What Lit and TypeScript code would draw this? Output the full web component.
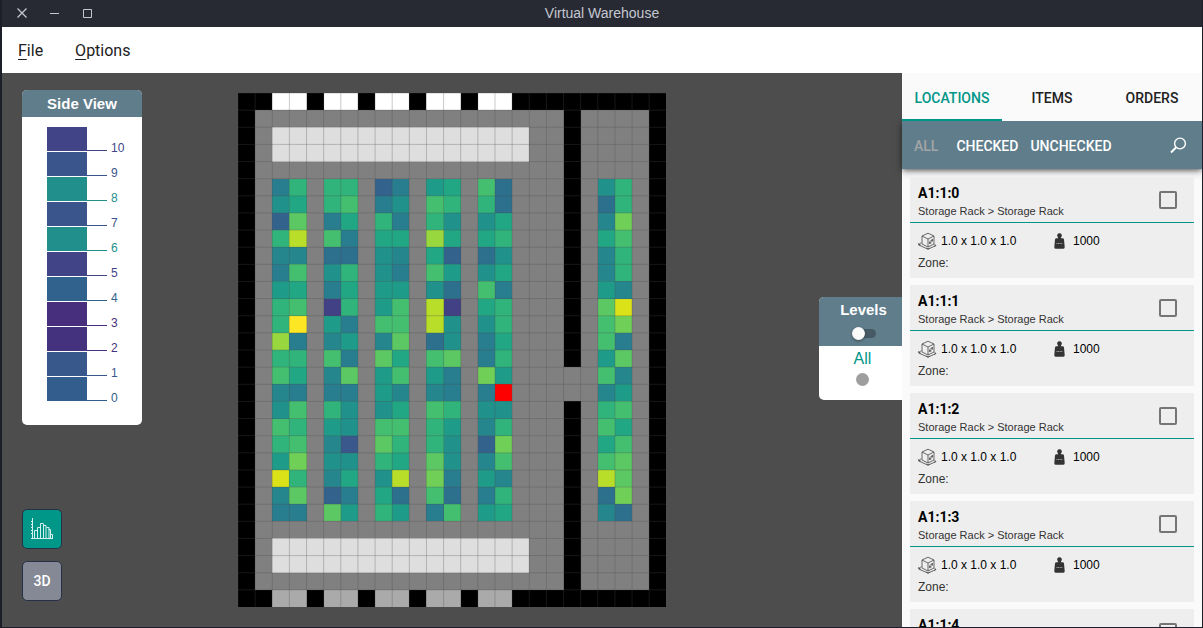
import { LitElement, html, svg, css } from "lit";
import { customElement, state } from "lit/decorators.js";

const SANS = css`"Liberation Sans", Arial, sans-serif`;

// Viridis ramp, sampled from 0.20 (a) to 1.00 (q); R marks the selected cell.
const RAMP: Record<string, string> = {
  a: "#424186", b: "#3a588c", c: "#33638d", d: "#2d708e", e: "#287d8e",
  f: "#25878d", g: "#21918c", h: "#1f9c89", i: "#22a785", j: "#30b47b",
  k: "#44bf70", l: "#5cc863", m: "#6fcf57", n: "#98d83e", o: "#b8de29",
  p: "#dce218", q: "#fde725", R: "#ff0000",
};

const RACK_COLUMNS = [2, 3, 5, 6, 8, 9, 11, 12, 14, 15, 21, 22];
const RACK_ROWS = [
  "ejjjcehikdgj", "gijkegkjjddj", "cleijejggifm", "jokeiiniijik",
  "ffddgficdgfj", "ekgjgekhgifj", "hieihhgdkehf", "jkajhkoaijlp",
  "jqhekkoggjkm", "nefhfldgeike", "jjkeliklejhl", "kiflhkhemhkf",
  "feeehffeeRfh", "gkjggikjggjk", "kjhgkkjhfjki", "jkfbljjgcmik",
  "hmggjilgfkkl", "pjfigomehfol", "flceidkdejdm", "eelhjhekhifd",
];
const COLS = 25;
const ROWS = 30;

const LEVELS = [
  [10, "#414487"], [9, "#39558c"], [8, "#218f8c"], [7, "#39558c"],
  [6, "#218f8c"], [5, "#414487"], [4, "#31628d"], [3, "#472f7d"],
  [2, "#45327e"], [1, "#38588c"], [0, "#335d8d"],
] as const;

@customElement("warehouse-map")
class WarehouseMap extends LitElement {
  static styles = css`
    :host { display: block; height: 100%; min-height: 0; }
    .map { display: block; height: 100%; aspect-ratio: 25 / 30; }
    .line { stroke: #4b4b4b; stroke-opacity: 0.3; stroke-width: 1; vector-effect: non-scaling-stroke; }
  `;

  private rect(x: number, y: number, w: number, h: number, fill: string) {
    return svg`<rect x=${x} y=${y} width=${w} height=${h} fill=${fill}></rect>`;
  }

  render() {
    const docks = [2, 5, 8, 11, 14];
    const cells = RACK_ROWS.flatMap((row, r) =>
      RACK_COLUMNS.map((c, i) => this.rect(c, r + 5, 1, 1, RAMP[row[i]])));
    return html`<svg class="map" viewBox="0 0 25 30" role="img" aria-label="Warehouse floor">
      <g shape-rendering="crispEdges">
        ${this.rect(0, 0, COLS, ROWS, "#000")}
        ${this.rect(1, 1, 18, 28, "#808080")}
        ${this.rect(20, 1, 4, 28, "#808080")}
        ${this.rect(19, 16, 1, 2, "#808080")}
        ${this.rect(2, 2, 15, 2, "#dedede")}
        ${this.rect(2, 26, 15, 2, "#dedede")}
        ${docks.map((x) => this.rect(x, 0, 2, 1, "#fff"))}
        ${docks.map((x) => this.rect(x, 29, 2, 1, "#aaa"))}
        ${cells}
      </g>
      ${Array.from({ length: COLS }, (_, x) => svg`<line class="line" x1=${x} x2=${x} y1="0" y2="30"></line>`)}
      ${Array.from({ length: ROWS }, (_, y) => svg`<line class="line" x1="0" x2="25" y1=${y} y2=${y}></line>`)}
    </svg>`;
  }
}

@customElement("side-view")
class SideView extends LitElement {
  static styles = css`
    :host { display: block; width: 120px; border-radius: 5px; background: #fff; overflow: hidden; font-family: ${SANS}; }
    .title { margin: 0; background: #607d8b; color: #fff; font-size: 15px; line-height: 27px; font-weight: bold; text-align: center; }
    .bars { margin: 0; padding: 10px 0 24px 25px; display: grid; gap: 1px; list-style: none; }
    .level { display: flex; align-items: flex-end; height: 24px; font-size: 12px; line-height: 5px; }
    .bar { width: 40px; height: 24px; background: currentColor; }
    .tick { width: 20px; height: 1px; margin-right: 4px; background: currentColor; }
  `;

  render() {
    return html`<h2 class="title">Side View</h2>
      <ul class="bars">
        ${LEVELS.map(([n, color]) => html`<li class="level" style="color:${color}">
          <span class="bar"></span><span class="tick"></span><span>${n}</span>
        </li>`)}
      </ul>`;
  }
}

@customElement("location-card")
class LocationCard extends LitElement {
  static properties = { name: {} };
  declare name: string;

  static styles = css`
    :host { display: block; flex: none; background: #eee; font-family: ${SANS}; color: #000; }
    .head { display: flex; justify-content: space-between; align-items: center; height: 45px; padding: 0 17px 0 8px; border-bottom: 1px solid #009688; }
    .title { padding-top: 4px; }
    .name { display: block; font-size: 14px; line-height: 18px; font-weight: bold; font-family: Roboto, sans-serif; }
    .path { display: block; font-size: 11px; line-height: 18px; color: #333; }
    .check { appearance: none; box-sizing: border-box; width: 18px; height: 18px; margin: 0; border: 2px solid #757575; border-radius: 2px; }
    .check:checked { background: #009688; }
    .body { padding: 7px 8px 4px; font-size: 12px; line-height: 22px; }
    .facts { display: grid; grid-template-columns: 134px 1fr; }
    .fact { display: flex; align-items: center; gap: 4px; }
    .weight { gap: 6px; }
    .zone { color: #333; }
    .icon { flex: none; }
  `;

  render() {
    return html`<label class="head">
        <span class="title"><span class="name">${this.name}</span><span class="path">Storage Rack &gt; Storage Rack</span></span>
        <input class="check" type="checkbox" />
      </label>
      <div class="body">
        <div class="facts">
          <span class="fact">
            <svg class="icon" width="19" height="18" viewBox="0 0 19 18" fill="none" stroke="#444" stroke-width="0.8" stroke-linejoin="round">
              <path d="M10 1.2 16 4v8l-6 3-6-3V4zM4 4l6 3 6-3M10 7v8" />
              <path d="M3 10.5.8 13 10 17.2l7.8-3.6M.8 11v2h2M16.5 12l1.4 1.6-1.8.8M8.600 16l1.400 1.200 1.600-1M11.500 11.500l3-4M11.500 11.500v-2M11.500 11.500l2-.6M12.500 8.500l2-1v2" />
            </svg>
            1.0 x 1.0 x 1.0
          </span>
          <span class="fact weight">
            <svg class="icon" width="15" height="16" viewBox="0 0 15 16">
              <path d="M7.500.3a2.300 2.300 0 0 1 1.800 3.800l-.5 1.200h1.700q1.300 0 1.500 1.200l.7 7.500q.1 1.700-1.200 1.700H3.500q-1.300 0-1.200-1.700l.7-7.500Q3.200 5.300 4.500 5.300h1.700l-.5-1.200A2.300 2.300 0 0 1 7.500.3z" fill="#333" />
              <path d="M4.500 10.500h6" stroke="#aaa" stroke-dasharray="1 .6" />
            </svg>
            1000
          </span>
        </div>
        <div class="zone">Zone:</div>
      </div>`;
  }
}

@customElement("app-root")
class AppRoot extends LitElement {
  @state() private tab = "LOCATIONS";

  static styles = css`
    :host { display: flex; flex-direction: column; box-sizing: border-box; height: 100vh; overflow: hidden; border: solid #1c1f28; border-width: 0 1px 1px 2px; background: #4d4d4e; font-family: Roboto, sans-serif; color: #212121; }
    button { border: 0; padding: 0; background: none; color: inherit; font: inherit; }
    .titlebar { display: grid; grid-template-columns: 1fr auto 1fr; align-items: center; flex: none; height: 27px; background: #282a33; color: #c3c7d1; font: 14px/26px ${SANS}; }
    .titletext { padding-bottom: 1px; }
    .controls { display: flex; gap: 19px; padding: 0 0 1px 13px; }
    .control { display: grid; width: 14px; height: 14px; place-items: center; }
    .menubar { display: flex; gap: 32px; flex: none; height: 46px; padding: 0 16px; background: #fff; font-size: 16px; }
    .menubar u { text-underline-offset: 3px; text-decoration-thickness: 1px; }
    .main { display: flex; flex: 1; min-height: 0; }
    .stage { display: grid; grid-template-columns: 1fr auto 1fr; grid-template-rows: minmax(0, 1fr); flex: 1; min-width: 0; }
    .tools { display: flex; flex-direction: column; justify-content: space-between; padding: 17px 20px 26px; }
    .mapbox { padding: 20px 0; min-height: 0; }
    .buttons { display: grid; justify-items: start; gap: 12px; }
    .tool { display: grid; place-items: center; box-sizing: border-box; width: 40px; height: 40px; border: 1px solid #263046; border-radius: 5px; background: #858995; color: #fff; font-size: 14px; font-weight: 500; }
    .tool.active { background: #009688; }
    .levels { align-self: center; justify-self: end; width: 83px; margin-bottom: 3px; border-radius: 5px 0 0 5px; overflow: hidden; background: #fff; font-family: ${SANS}; }
    .levels-head { display: grid; justify-items: center; align-content: start; height: 49px; padding-left: 6px; background: #607d8b; color: #fff; font-size: 15px; line-height: 26px; font-weight: bold; }
    .switch { appearance: none; display: flex; align-items: center; width: 24px; height: 9px; margin: 6px 0 0; border-radius: 5px; background: linear-gradient(#455a64, #455a64) right / 18px 100% no-repeat; }
    .switch::before { content: ""; width: 13px; height: 13px; flex: none; border-radius: 50%; background: #fafafa; box-shadow: 0 1px 3px #0006; }
    .level { display: grid; justify-items: center; align-content: start; height: 54px; padding-left: 4px; color: #009688; font-size: 16px; line-height: 26px; }
    .dot { appearance: none; width: 13px; height: 13px; margin: 1px 0; border-radius: 50%; background: #9e9e9e; }
    .sidebar { display: flex; flex-direction: column; width: 300px; flex: none; background: #fafafa; font-size: 14px; font-weight: 500; }
    .tabs { display: flex; flex: none; height: 48px; z-index: 1; background: #fafafa; }
    .tab { flex: 1; padding-top: 3px; border-bottom: 2px solid transparent; }
    .tab.active { border-color: #009688; color: #009688; }
    .filters { display: flex; align-items: center; gap: 12px; flex: none; height: 48px; padding: 0 15px 0 12px; background: #607d8b; color: #fff; box-shadow: 0 2px 4px -1px #0006, 0 2px 8px #0006; }
    .filter { padding-top: 2px; }
    .all { color: #a3a5a6; margin-right: 6px; }
    .search { display: grid; margin-left: auto; }
    .list { display: flex; flex-direction: column; gap: 7px; flex: 1; min-height: 0; overflow: hidden; padding: 8px 8px 0; font-weight: 400; }
  `;

  render() {
    return html`
      <header class="titlebar">
        <div class="controls">
          <button class="control" aria-label="Close"><svg width="10" height="10" stroke="currentColor" stroke-width="1.3"><path d="M.5.5l9 9M9.500.5l-9 9" /></svg></button>
          <button class="control" aria-label="Minimize"><svg width="10" height="10" stroke="currentColor"><path d="M0 5.500h9" /></svg></button>
          <button class="control" aria-label="Maximize"><svg width="10" height="10" fill="none" stroke="currentColor"><path d="M.5 1.500h8v8h-8z" /></svg></button>
        </div>
        <span class="titletext">Virtual Warehouse</span>
      </header>
      <nav class="menubar">
        <button><u>F</u>ile</button>
        <button><u>O</u>ptions</button>
      </nav>
      <main class="main">
        <section class="stage">
          <div class="tools">
            <side-view></side-view>
            <div class="buttons">
              <button class="tool active" aria-label="Histogram">
                <svg width="24" height="24" viewBox="0 0 24 24" fill="none" stroke="#d5efec" stroke-width="1">
                  <path d="M2.500 1v21M1 21.500h22M1 4.500h1M1 7.500h1M1 10.500h1M1 13.500h1M1 16.500h1" />
                  <path d="M4.500 21v-7.500h2.500M7.500 21V10.500h2.500M10.500 21V6.500h2.500M13.500 21V6.500M13.500 8.500h2.500V21M16.500 10.500h2.500V21M18.500 12.500h2V21M20.500 17.500h2V21" />
                </svg>
              </button>
              <button class="tool">3D</button>
            </div>
          </div>
          <div class="mapbox"><warehouse-map></warehouse-map></div>
          <div class="levels">
            <label class="levels-head">Levels<input class="switch" type="checkbox" role="switch" /></label>
            <label class="level">All<input class="dot" type="radio" name="level" /></label>
          </div>
        </section>
        <aside class="sidebar">
          <div class="tabs" role="tablist">
            ${["LOCATIONS", "ITEMS", "ORDERS"].map((t) => html`<button role="tab" class="tab ${t === this.tab ? "active" : ""}" @click=${() => (this.tab = t)}>${t}</button>`)}
          </div>
          <div class="filters">
            <button class="filter all">ALL</button>
            <button class="filter">CHECKED</button>
            <button class="filter">UNCHECKED</button>
            <button class="search" aria-label="Search">
              <svg width="17" height="17" fill="none" stroke="#fff" stroke-width="1.4"><circle cx="10" cy="6.500" r="5.400" /><path d="M6 10.500l-5 5" stroke-width="2" /></svg>
            </button>
          </div>
          <div class="list">
            ${[0, 1, 2, 3, 4].map((n) => html`<location-card .name=${`A1:1:${n}`}></location-card>`)}
          </div>
        </aside>
      </main>`;
  }
}
